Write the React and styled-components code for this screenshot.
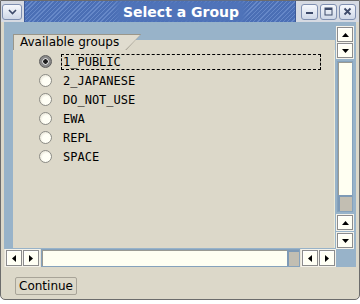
import styled, { createGlobalStyle } from "styled-components";

const GlobalStyle = createGlobalStyle`
  body {
    margin: 0;
    background: #ffffff;
  }
`;

const Window = styled.div`
  box-sizing: border-box;
  width: 360px;
  height: 300px;
  border: 1px solid #6c6c6c;
  border-radius: 0 0 5px 5px;
  background: #dcd8c9;
  display: flex;
  flex-direction: column;
  font-family: "DejaVu Sans", sans-serif;
`;

const TitleBar = styled.div`
  height: 21px;
  display: flex;
  align-items: center;
  background: #d6dae2;
`;

const MenuButton = styled.div`
  box-sizing: border-box;
  width: 20px;
  height: 16px;
  margin: 0 2px 0 1px;
  border: 1px solid #7f8fb0;
  border-radius: 3px;
  background: linear-gradient(#f6f8fc, #cfd8e8);
  display: flex;
  align-items: center;
  justify-content: center;
`;

const Stripes = styled.div`
  flex: 1;
  height: 21px;
  display: flex;
  align-items: center;
  justify-content: center;
  padding-left: 42px;
  background: repeating-linear-gradient(
    -45deg,
    #4b6fb5 0px,
    #4b6fb5 2px,
    #6688c8 2px,
    #6688c8 3px
  );
  border-left: 1px solid #3d5a98;
  border-right: 1px solid #3d5a98;
`;

const Title = styled.span`
  color: #ffffff;
  font-weight: bold;
  font-size: 14px;
  padding: 0 3px;
  background: #4f73b9;
  box-shadow: 0 0 4px 3px #4f73b9;
`;

const Controls = styled.div`
  display: flex;
  gap: 2px;
  padding: 0 3px 0 5px;
`;

const TitleButton = styled.div`
  box-sizing: border-box;
  width: 17px;
  height: 16px;
  border: 1px solid #7f8fb0;
  border-radius: 3px;
  background: linear-gradient(#f6f8fc, #cfd8e8);
  display: flex;
  align-items: center;
  justify-content: center;
`;

const Body = styled.div`
  flex: 1;
  display: flex;
  flex-direction: column;
  padding: 0 3px 2px 3px;
`;

const Panel = styled.div`
  height: 245px;
  display: grid;
  grid-template-columns: 332px 20px;
  grid-template-rows: 227px 18px;
  background: #98b3c9;
`;

const ContentCell = styled.div`
  display: flex;
  flex-direction: column;
  padding: 12px 1px 1px 9px;
`;

const TabRow = styled.div`
  height: 16px;
  display: flex;
  background: linear-gradient(to bottom, transparent 6px, #dcd8c9 6px);
`;

const TabEdge = styled.div`
  height: 16px;
  background: #9a968a;
  clip-path: polygon(0 0, 100% 0, calc(100% - 15px) 100%, 0 100%);
`;

const TabFace = styled.div`
  box-sizing: border-box;
  height: 16px;
  margin-left: 1px;
  padding: 1px 22px 0 6px;
  background: #e0dccf;
  clip-path: polygon(0 1px, calc(100% - 1px) 1px, calc(100% - 16px) 100%, 0 100%);
  font-size: 12px;
  line-height: 15px;
  color: #000000;
  white-space: nowrap;
`;

const GroupBox = styled.div`
  flex: 1;
  background: #dcd8c9;
  border-right: 1px solid #ecead8;
  padding: 2px 13px 0 26px;
  display: flex;
  flex-direction: column;
`;

const Row = styled.div`
  height: 19px;
  display: flex;
  align-items: center;
  gap: 9px;
`;

const Radio = styled.div`
  box-sizing: border-box;
  width: 13px;
  height: 13px;
  border-radius: 50%;
  border: 1px solid ${(p) => (p.checked ? "#5c5c5c" : "#8c8c86")};
  background: ${(p) =>
    p.checked
      ? "radial-gradient(circle, #1e1e1e 0 2px, #d8d8d8 2.5px 3px, #8a8a8a 3.5px)"
      : "radial-gradient(circle at 60% 60%, #fffff6 0 4px, #f0eee2 6px)"};
`;

const Label = styled.div`
  flex: 1;
  box-sizing: border-box;
  height: 16px;
  padding-left: 1px;
  border: 1px dashed ${(p) => (p.focused ? "#000000" : "transparent")};
  font-family: "DejaVu Sans Mono", monospace;
  font-size: 12px;
  line-height: 14px;
  color: #000000;
`;

const VScroll = styled.div`
  display: flex;
  flex-direction: column;
  gap: 3px;
  padding: 5px 3px 1px 1px;
`;

const ButtonPair = styled.div`
  display: flex;
  flex-direction: ${(p) => (p.row ? "row" : "column")};
  gap: ${(p) => p.gap}px;
`;

const ArrowButton = styled.div`
  box-sizing: border-box;
  width: 16px;
  height: ${(p) => p.h || 15}px;
  border: 1px solid #8c8c8c;
  box-shadow: inset 1px 1px 0 #ffffff;
  outline: 1px solid #f4f2ea;
  background: #fffff4;
  display: flex;
  align-items: center;
  justify-content: center;
`;

const Trough = styled.div`
  flex: 1;
  align-self: stretch;
  box-sizing: border-box;
  border: 1px solid #86a2bc;
  background: #fffff2;
  box-shadow: inset 1px 1px 0 #9a9a92;
  display: flex;
  flex-direction: ${(p) => (p.vertical ? "column" : "row")};
  justify-content: flex-end;
`;

const Thumb = styled.div`
  ${(p) => (p.vertical ? "height: 14px;" : "width: 10px;")}
  background: #c2beb2;
  border-top: 2px solid #7e9ab6;
  border-left: 2px solid #7e9ab6;
`;

const HScroll = styled.div`
  display: flex;
  align-items: center;
  gap: 2px;
  padding: 0 1px 0 2px;
  background: #e8e4d8;
`;

const Corner = styled.div`
  background: #98b3c9;
`;

const Footer = styled.div`
  height: 30px;
  padding: 8px 0 0 11px;
  box-sizing: border-box;
`;

const Button = styled.button`
  box-sizing: border-box;
  width: 62px;
  height: 18px;
  padding: 0;
  border: 1px solid #a8a498;
  border-radius: 2px;
  background: #dcd8c9;
  font-family: "DejaVu Sans", sans-serif;
  font-size: 12px;
  color: #000000;
`;

const Arrow = ({ dir }) => {
  const pts = {
    up: "0,4 3.5,0 7,4",
    down: "0,0 7,0 3.5,4",
    left: "4,0 4,7 0,3.5",
    right: "0,0 0,7 4,3.5",
  }[dir];
  const vert = dir === "up" || dir === "down";
  return (
    <svg width={vert ? 7 : 4} height={vert ? 4 : 7} viewBox={vert ? "0 0 7 4" : "0 0 4 7"}>
      <polygon points={pts} fill="#000000" />
    </svg>
  );
};

const groups = ["1_PUBLIC", "2_JAPANESE", "DO_NOT_USE", "EWA", "REPL", "SPACE"];

export default function App() {
  return (
    <>
      <GlobalStyle />
      <Window>
        <TitleBar>
          <MenuButton>
            <svg width="9" height="6" viewBox="0 0 9 6">
              <path d="M1 1 L4.5 4.5 L8 1" fill="none" stroke="#3d4a6a" strokeWidth="1.6" />
            </svg>
          </MenuButton>
          <Stripes>
            <Title>Select a Group</Title>
          </Stripes>
          <Controls>
            <TitleButton>
              <svg width="9" height="9" viewBox="0 0 9 9">
                <rect x="1" y="5" width="7" height="2" fill="#3d4a6a" />
              </svg>
            </TitleButton>
            <TitleButton>
              <svg width="9" height="9" viewBox="0 0 9 9">
                <rect x="1" y="1" width="7" height="7" fill="none" stroke="#3d4a6a" strokeWidth="1" />
                <rect x="1" y="1" width="7" height="2" fill="#3d4a6a" />
              </svg>
            </TitleButton>
            <TitleButton>
              <svg width="9" height="9" viewBox="0 0 9 9">
                <path d="M1.5 1.5 L7.5 7.5 M7.5 1.5 L1.5 7.5" stroke="#3d4a6a" strokeWidth="1.8" />
              </svg>
            </TitleButton>
          </Controls>
        </TitleBar>
        <Body>
          <Panel>
            <ContentCell>
              <TabRow>
                <TabEdge>
                  <TabFace>Available groups</TabFace>
                </TabEdge>
              </TabRow>
              <GroupBox>
                {groups.map((g, i) => (
                  <Row key={g}>
                    <Radio checked={i === 0} />
                    <Label focused={i === 0}>{g}</Label>
                  </Row>
                ))}
              </GroupBox>
            </ContentCell>
            <VScroll>
              <ButtonPair gap={1}>
                <ArrowButton><Arrow dir="up" /></ArrowButton>
                <ArrowButton><Arrow dir="down" /></ArrowButton>
              </ButtonPair>
              <Trough vertical>
                <Thumb vertical />
              </Trough>
              <ButtonPair gap={3}>
                <ArrowButton><Arrow dir="up" /></ArrowButton>
                <ArrowButton><Arrow dir="down" /></ArrowButton>
              </ButtonPair>
            </VScroll>
            <HScroll>
              <ButtonPair row gap={1}>
                <ArrowButton h={16}><Arrow dir="left" /></ArrowButton>
                <ArrowButton h={16}><Arrow dir="right" /></ArrowButton>
              </ButtonPair>
              <Trough>
                <Thumb />
              </Trough>
              <ButtonPair row gap={1}>
                <ArrowButton h={16}><Arrow dir="left" /></ArrowButton>
                <ArrowButton h={16}><Arrow dir="right" /></ArrowButton>
              </ButtonPair>
            </HScroll>
            <Corner />
          </Panel>
          <Footer>
            <Button>Continue</Button>
          </Footer>
        </Body>
      </Window>
    </>
  );
}
